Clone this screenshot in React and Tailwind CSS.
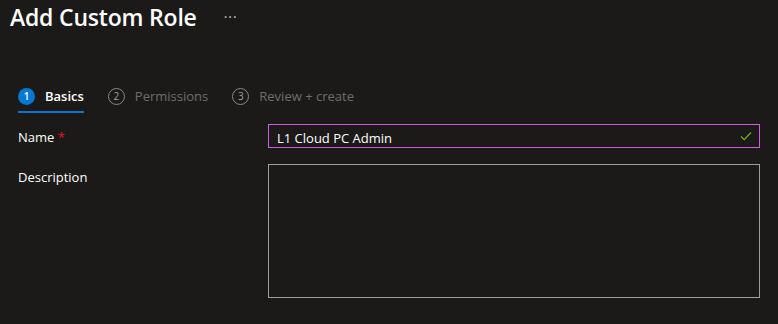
import React, { useState } from 'react';

const font = { fontFamily: '"Segoe UI", "Open Sans", "Noto Sans", sans-serif' };

const steps = [
  { n: 1, label: 'Basics' },
  { n: 2, label: 'Permissions' },
  { n: 3, label: 'Review + create' },
];

const Step = ({ n, label, active }) => (
  <div className={`flex items-center gap-[10px] h-[31px] ${active ? 'border-b-2 border-[#0078d4]' : 'border-b-2 border-transparent'}`}>
    {active ? (
      <span className="w-[17px] h-[17px] rounded-full bg-[#0078d4] text-white text-[10px] font-semibold flex items-center justify-center">
        {n}
      </span>
    ) : (
      <span className="w-[17px] h-[17px] rounded-full border border-[#8a8886] text-[#a19f9d] text-[10px] flex items-center justify-center">
        {n}
      </span>
    )}
    <span className={`text-[13px] ${active ? 'text-white font-semibold' : 'text-[#6e6d6c]'}`}>{label}</span>
  </div>
);

const App = () => {
  const [name, setName] = useState('L1 Cloud PC Admin');
  const [description, setDescription] = useState('');

  return (
    <div className="w-[778px] h-[324px] bg-[#1b1a19] overflow-hidden" style={font}>
      {/* Header */}
      <div className="flex items-center h-[34px] pl-[10px]">
        <h1 className="text-[23px] font-semibold text-white leading-none tracking-[-0.2px]">Add Custom Role</h1>
        <span className="ml-[27px] text-[#c8c6c4] text-[14px] leading-none tracking-[1px]">···</span>
      </div>

      {/* Tabs */}
      <div className="flex gap-[24px] pl-[18px] mt-[48px]">
        {steps.map(s => (
          <Step key={s.n} n={s.n} label={s.label} active={s.n === 1} />
        ))}
      </div>

      {/* Form */}
      <div className="pl-[18px] pr-[18px] mt-[11px]">
        <div className="flex items-center h-[24px]">
          <label className="w-[250px] text-[13px] text-white pt-[4px]">
            Name <span className="text-[#e81123]">*</span>
          </label>
          <div className="relative w-[492px] h-[24px] border border-[#d05ce3] bg-[#1b1a19]">
            <input
              value={name}
              onChange={e => setName(e.target.value)}
              className="w-full h-full bg-transparent text-white text-[13px] pl-[8px] pr-[28px] outline-none"
              style={font}
            />
            <svg className="absolute right-[7px] top-[6px]" width="12" height="10" viewBox="0 0 12 10" fill="none">
              <path d="M1 5.5 L4.2 8.6 L11 1.5" stroke="#6bb700" strokeWidth="1.2" />
            </svg>
          </div>
        </div>

        <div className="flex mt-[16px]">
          <label className="w-[250px] text-[13px] text-white pt-[4px]">Description</label>
          <textarea
            value={description}
            onChange={e => setDescription(e.target.value)}
            className="w-[492px] h-[134px] border border-[#a19f9d] bg-transparent text-white text-[13px] outline-none resize-none"
            style={font}
          />
        </div>
      </div>
    </div>
  );
};

export default App;
